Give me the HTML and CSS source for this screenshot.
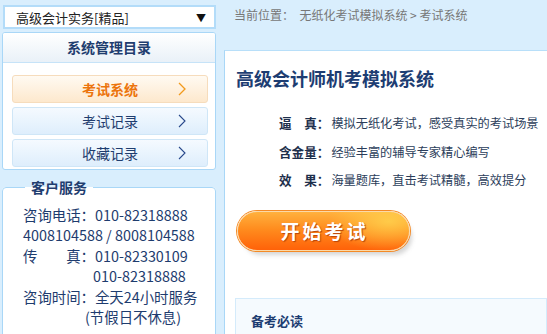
FILE: index.html
```html
<!DOCTYPE html>
<html lang="zh-CN">
<head>
  <meta charset="UTF-8" />
  <title>无纸化考试模拟系统</title>
  <link rel="stylesheet" href="styles.css">
</head>
<body>

  <div class="page">
    <!-- Sidebar -->
    <div class="sidebar">
      <div class="course-select">
        <span>高级会计实务[精品]</span>
        <span class="arrow">▼</span>
      </div>

      <div class="menu-panel">
        <div class="menu-title">系统管理目录</div>
        <div class="menu-body">
          <a href="#" class="menu-item active">考试系统
            <svg class="chev" width="8" height="14" viewBox="0 0 8 14"><polyline points="1,1 7,7 1,13" fill="none" stroke="currentColor" stroke-width="1.3"/></svg>
          </a>
          <a href="#" class="menu-item">考试记录
            <svg class="chev" width="8" height="14" viewBox="0 0 8 14"><polyline points="1,1 7,7 1,13" fill="none" stroke="currentColor" stroke-width="1.1"/></svg>
          </a>
          <a href="#" class="menu-item">收藏记录
            <svg class="chev" width="8" height="14" viewBox="0 0 8 14"><polyline points="1,1 7,7 1,13" fill="none" stroke="currentColor" stroke-width="1.1"/></svg>
          </a>
        </div>
      </div>

      <fieldset class="service">
        <legend>客户服务</legend>
        <div class="line">咨询电话：010-82318888</div>
        <div class="line">4008104588 / 8008104588</div>
        <div class="line"><span class="lbl">传　　真：</span>010-82330109</div>
        <div class="line indent">010-82318888</div>
        <div class="line">咨询时间：全天24小时服务</div>
        <div class="line indent2">(节假日不休息)</div>
      </fieldset>
    </div>

    <!-- Main -->
    <div class="main">
      <div class="crumb">当前位置：&nbsp; 无纸化考试模拟系统 &gt; 考试系统</div>

      <div class="content">
        <h1>高级会计师机考模拟系统</h1>

        <div class="features">
          <div class="feature"><b>逼　真：</b>模拟无纸化考试，感受真实的考试场景</div>
          <div class="feature"><b>含金量：</b>经验丰富的辅导专家精心编写</div>
          <div class="feature"><b>效　果：</b>海量题库，直击考试精髓，高效提分</div>
        </div>

        <a href="#" class="start-btn">开始考试</a>

        <div class="notice">
          <div class="notice-title">备考必读</div>
        </div>
      </div>
    </div>
  </div>

</body>
</html>
```

FILE: styles.css
```css
body {
  margin: 0;
  font-family: "Noto Sans CJK SC", "Noto Sans", sans-serif;
  background-color: #d9eefd;
  color: #1e3c6e;
  overflow: hidden;
}

.page {
  display: flex;
  align-items: flex-start;
}

/* Sidebar */
.sidebar {
  width: 214px;
  margin-left: 2px;
  flex-shrink: 0;
}

.course-select {
  margin: 5px 0 3px 1px;
  height: 20px;
  background: white;
  border: 2px solid #b3dcf9;
  display: flex;
  justify-content: space-between;
  align-items: center;
  padding: 0 8px 0 11px;
  font-size: 13px;
  color: #222;
}

.course-select .arrow {
  font-size: 10px;
  color: #111;
}

.menu-panel {
  background: white;
  border: 1px solid #a9d7f7;
  border-radius: 3px;
  overflow: hidden;
}

.menu-title {
  height: 29px;
  line-height: 29px;
  text-align: center;
  font-size: 14px;
  font-weight: 700;
  color: #1f3d6f;
  background: linear-gradient(to bottom, #ffffff, #e9f1f8);
  border-bottom: 1px solid #c6e3f8;
}

.menu-body {
  padding: 12px 7px 2px 9px;
  display: flex;
  flex-direction: column;
  gap: 4px;
}

.menu-item {
  position: relative;
  display: block;
  height: 26px;
  line-height: 26px;
  text-align: center;
  font-size: 14px;
  color: #1f3d6f;
  text-decoration: none;
  border: 1px solid #cfe6f7;
  border-radius: 3px;
  background: linear-gradient(to bottom, #f5faff, #deeefc);
}

.menu-item.active {
  color: #ec740c;
  font-weight: 700;
  border-color: #f6dcbc;
  background: linear-gradient(to bottom, #fffaf2, #fde8cd);
}

.menu-item .chev {
  position: absolute;
  right: 21px;
  top: 6px;
  color: #2a4a8c;
}

.menu-item.active .chev {
  color: #f29a1c;
}

.service {
  margin: 7px 0 0;
  padding: 8px 0 30px 20px;
  background: white;
  border: 1px solid #a9d7f7;
  border-radius: 4px;
  font-size: 14.4px;
  color: #1e3c6e;
}

.service legend {
  font-size: 14px;
  font-weight: 700;
  color: #1f3d6f;
  padding: 0 6px;
  margin-left: 2px;
}

.service .line {
  height: 20.4px;
  line-height: 20.4px;
  white-space: nowrap;
}

.service .indent {
  padding-left: 70px;
}

.service .indent2 {
  padding-left: 62px;
}

/* Main */
.main {
  flex: 1;
  margin-left: 8px;
  min-width: 0;
}

.crumb {
  height: 50px;
  padding: 6px 0 0 10px;
  box-sizing: border-box;
  font-size: 12px;
  color: #777;
}

.content {
  background: white;
  border-left: 1px solid #a9d7f7;
  border-top: 1px solid #b8dff9;
  padding: 14px 0 0 11px;
  height: 300px;
}

h1 {
  margin: 0;
  font-size: 18px;
  line-height: 26px;
  font-weight: 700;
  color: #1d3d72;
}

.features {
  margin: 18px 0 0 43px;
  font-size: 12.2px;
  color: #2b3d5a;
}

.feature {
  height: 28.5px;
  line-height: 28.5px;
  white-space: nowrap;
}

.feature b {
  font-size: 12.6px;
  margin-right: 2px;
  color: #1e2f4c;
}

.start-btn {
  display: block;
  width: 171px;
  height: 38px;
  line-height: 38px;
  margin-top: 16px;
  margin-left: 1px;
  border-radius: 20px;
  border: 1px solid #fbd9a8;
  text-align: center;
  text-indent: 2px;
  font-size: 19px;
  font-weight: 700;
  letter-spacing: 3px;
  color: white;
  text-decoration: none;
  text-shadow: 1px 1px 1px #b8450a;
  background:
    radial-gradient(ellipse 60px 30px at 88% 25%, rgba(255, 214, 80, 0.8), rgba(255, 214, 80, 0) 100%),
    linear-gradient(to bottom, #ffb13e 0%, #ff8c1e 45%, #ff6209 100%);
  box-shadow: 0 0 0 1px #f48a26, 4px 6px 4px -2px rgba(120, 120, 120, 0.3);
}

.notice {
  margin-top: 47px;
  margin-left: -1px;
  height: 60px;
  background: #f5fafe;
  border: 1px solid #d4ebfb;
  padding: 12px 0 0 15px;
}

.notice-title {
  font-size: 13px;
  font-weight: 700;
  color: #1d3d72;
}
```
